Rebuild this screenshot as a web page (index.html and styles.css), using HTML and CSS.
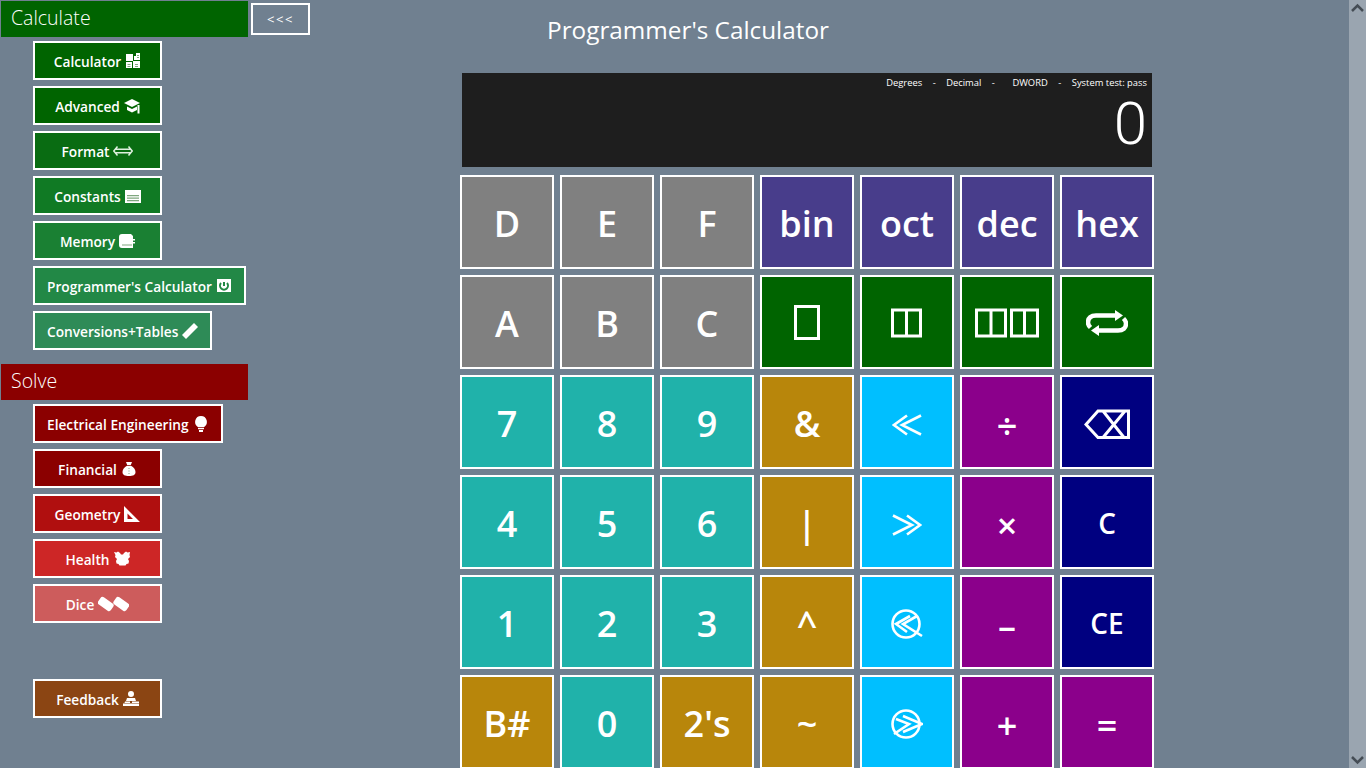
FILE: index.html
```html
<!DOCTYPE html>
<html lang="en">
<head>
    <meta charset="UTF-8">
    <meta name="viewport" content="width=device-width, initial-scale=1.0">
    <title>Programmer's Calculator</title>
    <link rel="stylesheet" href="styles.css">
</head>
<body>
    <nav class="sidebar">
        <div class="head-row">
            <h2 class="section section-green">Calculate</h2>
            <button class="back">&lt;&lt;&lt;</button>
        </div>
        <div class="links">
            <button class="link c1"><span>Calculator</span>
                <svg class="ico" viewBox="0 0 16 16"><path d="M1 1h7v7H1zM9 3h2v4H9zM11 0h4v7h-4zM1 9h6v6H1zM8 8h7v7H8z"/><path class="cut" d="M12 2h2v1h-2zM12 4h2v1h-2zM2.500 11h3v1h-3zM2.500 13h3v1h-3zM10 11h3v1h-3zM10 13h3v1h-3z"/></svg>
            </button>
            <button class="link c2"><span>Advanced</span>
                <svg class="ico" viewBox="0 0 16 16"><path d="M0 5l8-4 8 4-8 4z"/><path d="M3 8.500l5 2.500 5-2.500V12l-5 2.500L3 12zM13.500 7h2v8.500h-2z"/></svg>
            </button>
            <button class="link c3"><span>Format</span>
                <svg class="ico ico-wide" viewBox="0 0 20 16"><path class="line" d="M4.500 3.500L.8 8l3.700 4.500M15.500 3.500L19.200 8l-3.700 4.500M2 6.200h16M2 9.800h16"/></svg>
            </button>
            <button class="link c4"><span>Constants</span>
                <svg class="ico" viewBox="0 0 16 16"><path d="M0 2h16v13H0z"/><path class="cut" d="M2 7h12v1.200H2zM2 9.500h12v1.200H2zM2 12h12v1.200H2z"/></svg>
            </button>
            <button class="link c5"><span>Memory</span>
                <svg class="ico" viewBox="0 0 16 16"><path d="M3 1h9l2 2v3h2v1.500h-2V9h2v1.500h-2V15H3a3 3 0 0 1-3-3V4a3 3 0 0 1 3-3z"/><path class="cut" d="M3 11.500h10v1H3z"/></svg>
            </button>
            <button class="link c6"><span>Programmer's Calculator</span>
                <svg class="ico" viewBox="0 0 16 16"><path d="M1 1h14v13H1z"/><path class="cut-line" d="M5 5a4 4 0 1 0 6 0M8 4v4"/></svg>
            </button>
            <button class="link c7"><span>Conversions+Tables</span>
                <svg class="ico" viewBox="0 0 16 16"><path d="M12 0l4 4L4 16l-4-4z"/></svg>
            </button>
        </div>

        <h2 class="section section-red">Solve</h2>
        <div class="links">
            <button class="link r1"><span>Electrical Engineering</span>
                <svg class="ico" viewBox="0 0 16 16"><path d="M8 0a6 6 0 0 1 3.200 11H4.800A6 6 0 0 1 8 0zM5 11.800h6v1.500H5zM6 14h4v2H6z"/></svg>
            </button>
            <button class="link r1"><span>Financial</span>
                <svg class="ico" viewBox="0 0 16 16"><path d="M5 1h6L9.800 4H6.200zM6 4.800h4c2.800 1.500 4.500 4 4.500 6.200 0 3-2.500 4-6.500 4s-6.500-1-6.500-4c0-2.200 1.700-4.700 4.500-6.200z"/><path class="cut" d="M7.500 7h1v1h-1zM7.500 9.500h1v1h-1zM7.500 12h1v1h-1z"/></svg>
            </button>
            <button class="link r2"><span>Geometry</span>
                <svg class="ico" viewBox="0 0 16 16"><path fill-rule="evenodd" d="M0 0l16 16H0zM3.500 7.500V13H9z"/></svg>
            </button>
            <button class="link r3"><span>Health</span>
                <svg class="ico" viewBox="0 0 16 16"><path d="M0 1l2.500.5L4 .5 6 2l1 1.500h2L10 2l2-1.500 1.500 1L16 1l-.5 3L16 6l-2 2 1 2-.5 2.500-2 .5-1 1.500H5.500l-1-1.500-2-.5L2 10l1-2-2-2 .5-2z"/></svg>
            </button>
            <button class="link r4"><span>Dice</span>
                <svg class="ico ico-dice" viewBox="0 0 32 16"><rect x="0" y="3.500" width="16" height="9" rx="2.500" transform="rotate(35 8 8)"/><rect x="16" y="3.500" width="16" height="9" rx="2.500" transform="rotate(35 24 8)"/></svg>
            </button>
        </div>
        <div class="links links-last">
            <button class="link brown"><span>Feedback</span>
                <svg class="ico" viewBox="0 0 16 16"><path d="M5 3a3 3 0 1 1 6 0 3 3 0 0 1-6 0zM4 7h8l1 3H3zM9 10.500h7V12H9zM0 12.500h16V15H0zM2 10.500h5v1.500H1.500z"/></svg>
            </button>
        </div>
    </nav>

    <main class="pane">
        <h1 class="title">Programmer's Calculator</h1>
        <section class="display">
            <div class="status">
                <span>Degrees</span><span class="dot">-</span>
                <span>Decimal</span><span class="dot">-</span>
                <span class="st-word">DWORD</span><span class="dot">-</span>
                <span>System test: pass</span>
            </div>
            <div class="value">0</div>
        </section>
        <section class="keys">
            <button class="key gray">D</button>
            <button class="key gray">E</button>
            <button class="key gray">F</button>
            <button class="key slate">bin</button>
            <button class="key slate">oct</button>
            <button class="key slate">dec</button>
            <button class="key slate">hex</button>

            <button class="key gray">A</button>
            <button class="key gray">B</button>
            <button class="key gray">C</button>
            <button class="key green"><svg class="glyph" width="26" height="36" viewBox="0 0 26 36"><path class="stroke" d="M1.500 1.500h23v32h-23z"/></svg></button>
            <button class="key green"><svg class="glyph" width="32" height="30" viewBox="0 0 32 30"><path class="stroke" d="M1.500 2h28v26h-28zM15.500 2v26"/></svg></button>
            <button class="key green"><svg class="glyph" width="64" height="30" viewBox="0 0 64 30"><path class="stroke" d="M1.500 2h29v26h-29zM16 2v26M36.500 2h26v26h-26zM49.500 2v26"/></svg></button>
            <button class="key green"><svg class="glyph" width="42" height="26" viewBox="0 0 42 26"><path class="stroke-bold" d="M31 5.500H10C5 5.500 2 8 2 12.500c0 2 1 3.500 2.500 5M11 20.500h21c5 0 8-2.500 8-7 0-2-1-3.500-2.500-5"/><path class="fill" d="M29 0l8 5.500-8 5.500zM13 15l-8 5.500 8 5.500z"/></svg></button>

            <button class="key teal">7</button>
            <button class="key teal">8</button>
            <button class="key teal">9</button>
            <button class="key gold">&amp;</button>
            <button class="key sky"><svg class="glyph low" width="30" height="22" viewBox="0 0 30 22"><path class="stroke-thin" d="M15 1.500L2 11l13 9.500M29 1.500L10 11l19 9.500"/></svg></button>
            <button class="key magenta op">÷</button>
            <button class="key navy"><svg class="glyph down" width="46" height="30" viewBox="0 0 46 30"><path class="stroke" d="M14 2h30.500v26.500H14L2 15.500zM19 2l21 26.500M41 2L19 28.500"/></svg></button>

            <button class="key teal">4</button>
            <button class="key teal">5</button>
            <button class="key teal">6</button>
            <button class="key gold">|</button>
            <button class="key sky"><svg class="glyph low" width="30" height="22" viewBox="0 0 30 22"><path class="stroke-thin" d="M15 1.500L28 11l-13 9.500M1 1.500L20 11 1 20.500"/></svg></button>
            <button class="key magenta op">×</button>
            <button class="key navy sm">C</button>

            <button class="key teal">1</button>
            <button class="key teal">2</button>
            <button class="key teal">3</button>
            <button class="key gold">^</button>
            <button class="key sky"><svg class="glyph down" width="32" height="30" viewBox="0 0 32 30"><circle class="stroke-thin" cx="15" cy="15" r="13.500"/><path class="stroke-thin" d="M19 7L5 15l11 8M26 7L12 15l19 12"/></svg></button>
            <button class="key magenta op">–</button>
            <button class="key navy sm">CE</button>

            <button class="key gold">B#</button>
            <button class="key teal">0</button>
            <button class="key gold">2's</button>
            <button class="key gold">~</button>
            <button class="key sky"><svg class="glyph down" width="32" height="30" viewBox="0 0 32 30"><circle class="stroke-thin" cx="15" cy="15" r="13.500"/><path class="stroke-thin" d="M12 7l19 8-19 8M5 10l13 5L3 25"/></svg></button>
            <button class="key magenta op">+</button>
            <button class="key magenta op">=</button>
        </section>
    </main>

    <aside class="scrollbar">
        <svg class="arrow" width="17" height="17" viewBox="0 0 17 17"><path d="M3 11l5.500-5.500L14 11"/></svg>
        <svg class="arrow" width="17" height="17" viewBox="0 0 17 17"><path d="M3 6l5.500 5.500L14 6"/></svg>
    </aside>
</body>
</html>
```

FILE: styles.css
```css
html, body {
    height: 768px;
    overflow: hidden;
}
body {
    font-family: "Open Sans", "Noto Sans", sans-serif;
    background-color: #708090;
    color: white;
    margin: 0;
    padding: 0;
    display: flex;
}
button {
    font-family: inherit;
    color: white;
    cursor: pointer;
}

/* left menu */
.sidebar {
    width: 310px;
    flex: none;
    padding: 1px 0 0 1px;
    box-sizing: border-box;
}
.head-row {
    display: flex;
    align-items: flex-start;
}
.section {
    width: 247px;
    height: 36px;
    line-height: 34px;
    margin: 0;
    padding-left: 10px;
    box-sizing: border-box;
    font-size: 19.5px;
    font-weight: 300;
}
.section-green {
    background-color: #006400;
}
.section-red {
    background-color: #8b0000;
    margin-top: 14px;
}
.back {
    width: 59px;
    height: 32px;
    margin: 2px 0 0 3px;
    background: transparent;
    border: 2px solid white;
    font-size: 13px;
    letter-spacing: 1.5px;
    padding: 0;
}
.links {
    display: flex;
    flex-direction: column;
    align-items: flex-start;
    gap: 6px;
    margin: 4px 0 0 32px;
}
.links-last {
    margin-top: 56px;
}
.link {
    min-width: 129px;
    height: 39px;
    padding: 0 12px;
    border: 2px solid white;
    box-sizing: border-box;
    display: flex;
    align-items: center;
    justify-content: center;
    gap: 4px;
    font-size: 13.7px;
    font-weight: 600;
    white-space: nowrap;
}
.link span {
    padding-top: 2px;
}
.ico {
    width: 16px;
    height: 16px;
    flex: none;
    fill: white;
}
.ico-wide {
    width: 20px;
}
.ico-dice {
    width: 31px;
}
.ico .line {
    fill: none;
    stroke: #dff0df;
    stroke-width: 1.5;
}
.ico .cut {
    fill: rgba(0, 80, 0, 0.5);
}
.ico .cut-line {
    fill: none;
    stroke: #228844;
    stroke-width: 2;
}
.c1, .c2 { background-color: #006400; }
.c3 { background-color: #096c12; }
.c4 { background-color: #107a24; }
.c5 { background-color: #1a8033; }
.c6 { background-color: #228846; }
.c7 { background-color: #2e8b57; }
.r1 { background-color: #8b0000; }
.r2 { background-color: #b00f0f; }
.r3 { background-color: #cd2626; }
.r4 { background-color: #cd5c5c; }
.brown { background-color: #8b4513; }

/* calculator */
.pane {
    flex: 1;
    min-width: 0;
}
.title {
    width: 756px;
    height: 73px;
    line-height: 60px;
    margin: 0;
    text-align: center;
    font-size: 24.3px;
    font-weight: 400;
}
.display {
    width: 690px;
    height: 94px;
    margin-left: 152px;
    padding: 3px 5px 0 0;
    box-sizing: border-box;
    background-color: #1e1e1e;
}
.status {
    display: flex;
    justify-content: flex-end;
    font-size: 9.4px;
    line-height: 14px;
}
.dot {
    margin: 0 10.500px;
}
.st-word {
    margin-left: 7px;
}
.value {
    font-family: Roboto, sans-serif;
    text-align: right;
    font-size: 60px;
    font-weight: 300;
    line-height: 64px;
    margin-top: 2px;
}
.keys {
    display: grid;
    grid-template-columns: repeat(7, 94px);
    grid-auto-rows: 94px;
    gap: 6px;
    margin: 8px 0 0 150px;
}
.key {
    border: 2px solid white;
    padding: 2px 0 0;
    font-size: 36px;
    font-weight: 600;
    display: flex;
    align-items: center;
    justify-content: center;
}
.key.sm {
    font-size: 28px;
}
.key.op {
    padding-top: 6px;
}
.glyph {
    fill: none;
    stroke: white;
}
.glyph.low {
    margin-top: 4px;
}
.glyph.down {
    margin-top: 2px;
}
.glyph .stroke { stroke-width: 3; }
.glyph .stroke-thin { stroke-width: 2.6; }
.glyph .stroke-bold { stroke-width: 4.500; }
.glyph .fill { fill: white; stroke: none; }
.gray { background-color: #808080; }
.slate { background-color: #483d8b; }
.green { background-color: #006400; }
.teal { background-color: #20b2aa; }
.gold { background-color: #b8860b; }
.sky { background-color: #00bfff; }
.magenta { background-color: #8b008b; }
.navy { background-color: #000080; }

/* scrollbar */
.scrollbar {
    width: 17px;
    flex: none;
    background-color: #9aa5b0;
    display: flex;
    flex-direction: column;
    justify-content: space-between;
}
.arrow {
    fill: none;
    stroke: #454d55;
    stroke-width: 2.5;
}
```
